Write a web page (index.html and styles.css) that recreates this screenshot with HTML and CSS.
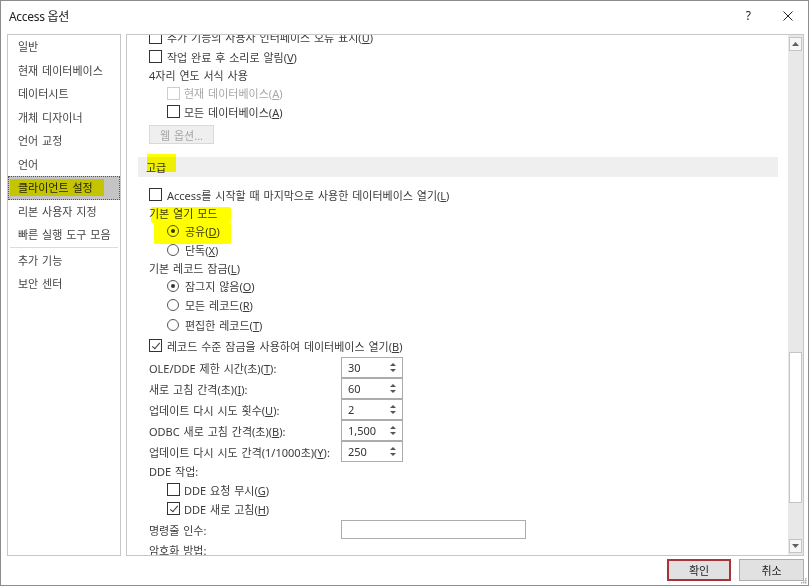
FILE: index.html
```html
<!DOCTYPE html>
<html lang="ko">
<head>
    <meta charset="UTF-8">
    <title>Access 옵션</title>
    <link rel="stylesheet" href="styles.css">
</head>
<body>
<div class="window">
    <div class="titlebar">
        <span class="title">Access 옵션</span>
        <span class="help">?</span>
        <span class="close">
            <svg width="10" height="10" viewBox="0 0 10 10"><path d="M0.5 0.5 L9.5 9.5 M9.5 0.5 L0.5 9.5" stroke="#222" stroke-width="1"/></svg>
        </span>
    </div>

    <div class="main">
        <ul class="nav">
            <li>일반</li>
            <li>현재 데이터베이스</li>
            <li>데이터시트</li>
            <li>개체 디자이너</li>
            <li>언어 교정</li>
            <li>언어</li>
            <li class="active">클라이언트 설정</li>
            <li>리본 사용자 지정</li>
            <li>빠른 실행 도구 모음</li>
            <li class="sep"></li>
            <li>추가 기능</li>
            <li>보안 센터</li>
        </ul>

        <div class="pane">
            <div class="content">
                <div class="options">
                    <div class="row first"><span class="cb"></span><span>추가 기능의 사용자 인터페이스 오류 표시(<u>U</u>)</span></div>
                    <div class="row"><span class="cb"></span><span>작업 완료 후 소리로 알림(<u>V</u>)</span></div>
                    <div class="row lbl"><span>4자리 연도 서식 사용</span></div>
                    <div class="row lbl sub disabled"><span class="cb"></span><span>현재 데이터베이스(<u>A</u>)</span></div>
                    <div class="row sub"><span class="cb"></span><span>모든 데이터베이스(<u>A</u>)</span></div>
                    <div class="row btn-row"><span class="web-btn">웹 옵션...</span></div>

                    <div class="section">고급</div>

                    <div class="row after-section"><span class="cb"></span><span>Access를 시작할 때 마지막으로 사용한 데이터베이스 열기(<u>L</u>)</span></div>
                    <div class="row lbl"><span>기본 열기 모드</span></div>
                    <div class="row lbl sub"><span class="rb on"></span><span>공유(<u>D</u>)</span></div>
                    <div class="row sub"><span class="rb"></span><span>단독(<u>X</u>)</span></div>
                    <div class="row lbl"><span>기본 레코드 잠금(<u>L</u>)</span></div>
                    <div class="row lbl sub"><span class="rb on"></span><span>잠그지 않음(<u>O</u>)</span></div>
                    <div class="row tall sub"><span class="rb"></span><span>모든 레코드(<u>R</u>)</span></div>
                    <div class="row tall sub"><span class="rb"></span><span>편집한 레코드(<u>T</u>)</span></div>
                    <div class="row taller"><span class="cb checked"></span><span>레코드 수준 잠금을 사용하여 데이터베이스 열기(<u>B</u>)</span></div>

                    <div class="field first-field">
                        <span class="field-label">OLE/DDE 제한 시간(초)(<u>T</u>):</span>
                        <span class="spin">30</span>
                    </div>
                    <div class="field">
                        <span class="field-label">새로 고침 간격(초)(<u>I</u>):</span>
                        <span class="spin">60</span>
                    </div>
                    <div class="field">
                        <span class="field-label">업데이트 다시 시도 횟수(<u>U</u>):</span>
                        <span class="spin">2</span>
                    </div>
                    <div class="field">
                        <span class="field-label">ODBC 새로 고침 간격(초)(<u>B</u>):</span>
                        <span class="spin">1,500</span>
                    </div>
                    <div class="field">
                        <span class="field-label">업데이트 다시 시도 간격(1/1000초)(<u>Y</u>):</span>
                        <span class="spin">250</span>
                    </div>

                    <div class="row lbl"><span>DDE 작업:</span></div>
                    <div class="row sub"><span class="cb"></span><span>DDE 요청 무시(<u>G</u>)</span></div>
                    <div class="row sub"><span class="cb checked"></span><span>DDE 새로 고침(<u>H</u>)</span></div>
                    <div class="field cmd">
                        <span class="field-label">명령줄 인수:</span>
                        <span class="textbox"></span>
                    </div>
                    <div class="row lbl"><span>암호화 방법:</span></div>
                </div>
            </div>

            <div class="scrollbar">
                <div class="sb-btn"><svg width="7" height="4" viewBox="0 0 7 4"><path d="M0 4 L3.5 0 L7 4 Z" fill="#606060"/></svg></div>
                <div class="sb-track"><div class="sb-thumb"></div></div>
                <div class="sb-btn"><svg width="7" height="4" viewBox="0 0 7 4"><path d="M0 0 L3.5 4 L7 0 Z" fill="#606060"/></svg></div>
            </div>
        </div>
    </div>

    <div class="footer">
        <button class="btn default">확인</button>
        <button class="btn">취소</button>
        <svg class="grip" width="6" height="6" viewBox="0 0 6 6">
            <rect x="4" y="0" width="1.5" height="1.5" fill="#b0b0b0"/>
            <rect x="2" y="2" width="1.5" height="1.5" fill="#b0b0b0"/>
            <rect x="4" y="2" width="1.5" height="1.5" fill="#b0b0b0"/>
            <rect x="0" y="4" width="1.5" height="1.5" fill="#b0b0b0"/>
            <rect x="2" y="4" width="1.5" height="1.5" fill="#b0b0b0"/>
            <rect x="4" y="4" width="1.5" height="1.5" fill="#b0b0b0"/>
        </svg>
    </div>

    <!-- marker strokes drawn over the screenshot -->
    <span class="marker mk-nav"></span>
    <span class="marker mk-section"></span>
    <span class="marker mk-mode1"></span>
    <span class="marker mk-mode2"></span>
</div>
</body>
</html>
```

FILE: styles.css
```css
body { margin: 0; background: #fff; font-family: "Noto Sans", "Noto Sans CJK KR", sans-serif; font-size: 11px; word-spacing: 1px; color: #3b3b3b; }
u { text-decoration: underline; text-underline-offset: 1px; }

.window { position: relative; box-sizing: border-box; width: 809px; height: 586px; border: 1px solid #8c8c8c; background: #fff; display: flex; flex-direction: column; }

.titlebar { height: 33px; flex: none; display: flex; align-items: center; padding: 0 0 4px 8px; box-sizing: border-box; color: #222; }
.title { font-size: 12px; letter-spacing: -0.3px; word-spacing: 0; flex: 1; }
.help { font-size: 12px; margin-right: 32px; }
.close { width: 10px; height: 10px; margin-right: 15px; display: flex; }

.main { height: 522px; flex: none; display: flex; gap: 5px; padding: 0 4px 0 6px; }

.nav { width: 114px; box-sizing: border-box; margin: 0; padding: 0; list-style: none; border: 1px solid #c6c6c6; }
.nav li { height: 23.5px; line-height: 23.5px; padding-left: 10px; box-sizing: border-box; color: #444; white-space: nowrap; }
.nav li.active { background: #c4c4c4; outline: 1px dotted #555; outline-offset: -1px; color: #222; }
.nav li.sep { height: 2px; margin: 0 2px; border-top: 1px solid #dcdcdc; }

.pane { flex: 1; display: flex; border: 1px solid #c6c6c6; overflow: hidden; }
.content { flex: 1; overflow: hidden; }
.options { padding-left: 22px; margin-top: -8px; }

.row { display: flex; align-items: center; gap: 5px; height: 19px; white-space: nowrap; }
.row.first { height: 20px; }
.row.lbl { height: 18px; }
.row.tall { height: 20px; }
.row.taller { height: 21px; }
.row.sub { padding-left: 18px; gap: 4px; }
.row.sub .rb { margin-right: 2px; }
.row.disabled { color: #a8a8a8; }
.btn-row { margin-top: 4px; }
.after-section { margin-top: 8px; }

.cb { width: 13px; height: 13px; box-sizing: border-box; border: 1px solid #333; background: #fff; flex: none; position: relative; }
.disabled .cb { border-color: #cdcdcd; }
.cb.checked::after { content: ""; position: absolute; left: 3.5px; top: 0.5px; width: 3px; height: 7px; border: solid #333; border-width: 0 1px 1px 0; transform: rotate(40deg); }
.rb { width: 12px; height: 12px; box-sizing: border-box; border: 1px solid #555; border-radius: 50%; background: #fff; flex: none; position: relative; }
.rb.on::after { content: ""; position: absolute; left: 3px; top: 3px; width: 4px; height: 4px; border-radius: 50%; background: #333; }

.web-btn { width: 65px; height: 19px; box-sizing: border-box; border: 1px solid #d9d9d9; background: #efefef; color: #a6a6a6; display: flex; align-items: center; padding-left: 10px; }

.section { margin: 13px 10px 0 -11px; height: 20px; display: flex; align-items: center; background: #efefef; padding: 0 0 1px 8px; box-sizing: border-box; color: #333; }

.field { display: flex; align-items: center; height: 21px; white-space: nowrap; }
.first-field { margin-top: 1px; }
.field-label { width: 192px; flex: none; }
.spin { position: relative; width: 62px; height: 21px; box-sizing: border-box; border: 1px solid #acacac; padding-left: 6px; display: flex; align-items: center; color: #333; }
.spin::before, .spin::after { content: ""; position: absolute; right: 6px; border-left: 3px solid transparent; border-right: 3px solid transparent; }
.spin::before { top: 5px; border-bottom: 3px solid #555; }
.spin::after { bottom: 5px; border-top: 3px solid #555; }
.field.cmd { height: 23px; }
.textbox { width: 185px; height: 19px; box-sizing: border-box; border: 1px solid #acacac; }

.scrollbar { width: 15px; flex: none; display: flex; flex-direction: column; background: #e8e8e8; padding: 2px 1px 2px 1px; box-sizing: border-box; }
.sb-btn { height: 14px; flex: none; box-sizing: border-box; border: 1px solid #c4c4c4; background: #f6f6f6; display: flex; align-items: center; justify-content: center; }
.sb-track { flex: 1; }
.sb-thumb { margin-top: 301px; height: 151px; box-sizing: border-box; border: 1px solid #c4c4c4; background: #fff; }

.footer { flex: 1; display: flex; justify-content: flex-end; align-items: flex-start; gap: 8px; padding: 3px 4px 0 0; position: relative; }
.btn { height: 22px; width: 65px; box-sizing: border-box; border: 1px solid #adadad; background: #e1e1e1; font-family: inherit; font-size: 11px; color: #222; padding: 0; }
.btn.default { width: 64px; border: 2px solid #a8343a; }
.grip { position: absolute; right: 1px; bottom: 1px; }

.marker { position: absolute; background: #ffff00; mix-blend-mode: multiply; }
.mk-nav { left: 9px; top: 178px; width: 94px; height: 17px; }
.mk-section { left: 146px; top: 153px; width: 29px; height: 18px; }
.mk-mode1 { left: 150px; top: 206px; width: 80px; height: 16px; border-radius: 2px; }
.mk-mode2 { left: 153px; top: 221px; width: 77px; height: 22px; border-radius: 2px; }
```
